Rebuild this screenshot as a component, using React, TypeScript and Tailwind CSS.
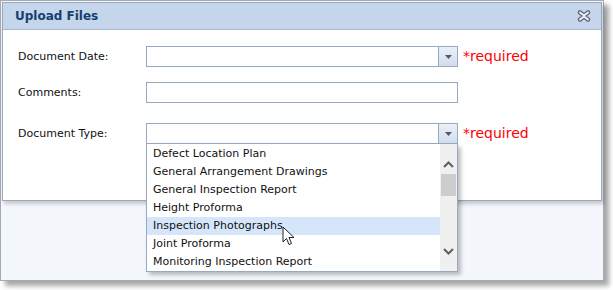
import React from 'react'

const font = { fontFamily: '"DejaVu Sans", Verdana, sans-serif' }

const items = [
  'Defect Location Plan',
  'General Arrangement Drawings',
  'General Inspection Report',
  'Height Proforma',
  'Inspection Photographs',
  'Joint Proforma',
  'Monitoring Inspection Report',
]

function ComboButton() {
  return (
    <div className="flex h-full w-[19px] items-center justify-center border-l border-[#98a9c2] bg-gradient-to-b from-[#eaf0f8] to-[#d2ddec]">
      <svg width="7" height="4" viewBox="0 0 7 4">
        <path d="M0 0h7L3.5 4z" fill="#4a5a70" />
      </svg>
    </div>
  )
}

function Required() {
  return <span className="ml-[5px] text-[14px] text-[#ff0000]">*required</span>
}

export default function App() {
  return (
    <div className="h-[290px] w-[613px] bg-white" style={font}>
      <div className="relative h-[281px] w-[604px] border border-[#a4aab3] bg-[#f4f8fd] p-px shadow-[5px_5px_5px_rgba(0,0,0,0.35)]">
        <div className="h-[199px] w-[600px] border border-[#9aa8bd] bg-white shadow-[2px_3px_4px_rgba(0,0,0,0.2)]">
          <div className="flex h-[27px] items-center justify-between border-b border-[#a9b8cc] bg-[#c4d5ec] pl-[12px] pr-[10px]">
            <span className="text-[12px] font-bold text-[#15406e]">Upload Files</span>
            <svg width="14" height="12" viewBox="0 0 14 12">
              <path
                d="M3 2.5l4 3 4-3M3 9.5l4-3 4 3"
                stroke="#5e6676"
                strokeWidth="4.5"
                strokeLinecap="round"
                strokeLinejoin="round"
                fill="none"
              />
              <path
                d="M3 2.5l4 3 4-3M3 9.5l4-3 4 3"
                stroke="#eef1f5"
                strokeWidth="2"
                strokeLinecap="round"
                strokeLinejoin="round"
                fill="none"
              />
            </svg>
          </div>
          <div className="pl-[15px] pt-[16px] text-[11px] text-[#111]">
            <div className="flex h-[21px] items-center">
              <span className="w-[128px] pt-[2px]">Document Date:</span>
              <div className="flex h-[21px] w-[312px] justify-end border border-[#98a9c2] bg-white">
                <ComboButton />
              </div>
              <Required />
            </div>
            <div className="mt-[15px] flex h-[21px] items-center">
              <span className="w-[128px] pt-[2px]">Comments:</span>
              <div className="h-[21px] w-[312px] border border-[#98a9c2] bg-white" />
            </div>
            <div className="relative mt-[20px] flex h-[21px] items-center">
              <span className="w-[128px] pt-[2px]">Document Type:</span>
              <div className="flex h-[21px] w-[312px] justify-end border border-[#98a9c2] bg-white">
                <ComboButton />
              </div>
              <Required />
              <div className="absolute left-[128px] top-[21px] z-10 flex h-[128px] w-[312px] border border-t-0 border-[#98a9c2] bg-white shadow-[3px_3px_4px_rgba(0,0,0,0.25)]">
                <div className="flex-1 pt-[1px]">
                  {items.map((it) => (
                    <div
                      key={it}
                      className={`flex h-[18px] items-center pl-[6px] pt-[1px] ${
                        it === 'Inspection Photographs' ? 'bg-[#d5e6fb]' : ''
                      }`}
                    >
                      {it}
                    </div>
                  ))}
                </div>
                <div className="flex w-[17px] flex-col items-center bg-[#f0f0f0]">
                  <svg className="mt-[17px]" width="11" height="7" viewBox="0 0 11 7">
                    <path d="M1 6l4.5-4.5L10 6" stroke="#606060" strokeWidth="2" fill="none" />
                  </svg>
                  <div className="mt-[6px] h-[22px] w-[15px] bg-[#cdcdcd]" />
                  <div className="flex-1" />
                  <svg className="mb-[16px]" width="11" height="7" viewBox="0 0 11 7">
                    <path d="M1 1l4.5 4.5L10 1" stroke="#606060" strokeWidth="2" fill="none" />
                  </svg>
                </div>
              </div>
            </div>
          </div>
        </div>
        <svg className="absolute left-[281px] top-[225px] z-20" width="14" height="20" viewBox="0 0 14 20">
          <path d="M1 1v15l3.5-3.5 2.5 6 2.5-1-2.5-6H12z" fill="#ffffff" stroke="#222" strokeWidth="1" strokeLinejoin="round" />
        </svg>
      </div>
    </div>
  )
}
